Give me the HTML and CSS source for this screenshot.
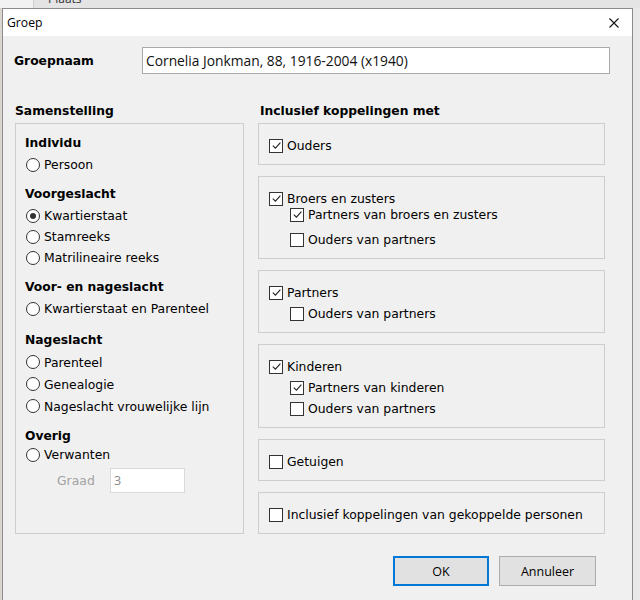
FILE: index.html
```html
<!DOCTYPE html>
<html>
<head>
<meta charset="utf-8">
<link rel="stylesheet" href="styles.css">
</head>
<body>
<div class="backdrop-top"><div class="tabcell"><span class="tabtext">Plaats</span></div></div>
<div class="stage">
  <div class="edge-left"></div>
  <div class="dialog">
    <div class="titlebar">
      <span class="title">Groep</span>
      <svg class="close" width="10" height="10" viewBox="0 0 10 10"><path d="M0.5 0.5 L9.5 9.5 M9.5 0.5 L0.5 9.5" stroke="#111" stroke-width="1.1" fill="none"/></svg>
    </div>
    <div class="content">
      <div class="namerow">
        <span class="namelabel">Groepnaam</span>
        <div class="textinput">Cornelia Jonkman, 88, 1916-2004 (x1940)</div>
      </div>
      <div class="columns">
        <div class="col col-left">
          <div class="colhead">Samenstelling</div>
          <div class="groupbox">
            <div class="section">
              <div class="sechead">Individu</div>
              <div class="opt"><span class="radio"></span>Persoon</div>
            </div>
            <div class="section">
              <div class="sechead">Voorgeslacht</div>
              <div class="opt"><span class="radio on"></span>Kwartierstaat</div>
              <div class="opt"><span class="radio"></span>Stamreeks</div>
              <div class="opt"><span class="radio"></span>Matrilineaire reeks</div>
            </div>
            <div class="section section-spaced">
              <div class="sechead">Voor- en nageslacht</div>
              <div class="opt"><span class="radio"></span>Kwartierstaat en Parenteel</div>
            </div>
            <div class="section section-wide">
              <div class="sechead">Nageslacht</div>
              <div class="opt"><span class="radio"></span>Parenteel</div>
              <div class="opt"><span class="radio"></span>Genealogie</div>
              <div class="opt"><span class="radio"></span>Nageslacht vrouwelijke lijn</div>
            </div>
            <div class="section section-tight">
              <div class="sechead">Overig</div>
              <div class="opt"><span class="radio"></span>Verwanten</div>
              <div class="graadrow">
                <span class="graadlabel">Graad</span>
                <div class="graadinput">3</div>
              </div>
            </div>
          </div>
        </div>
        <div class="col col-right">
          <div class="colhead colhead-right">Inclusief koppelingen met</div>
          <div class="box">
            <div class="opt"><span class="check on"><svg viewBox="0 0 11 11" width="11" height="11"><path d="M1.8 5.6 L4.4 8.2 L9.4 2.6" stroke="#222" stroke-width="1.1" fill="none"/></svg></span>Ouders</div>
          </div>
          <div class="box">
            <div class="opt"><span class="check on"><svg viewBox="0 0 11 11" width="11" height="11"><path d="M1.8 5.6 L4.4 8.2 L9.4 2.6" stroke="#222" stroke-width="1.1" fill="none"/></svg></span>Broers en zusters</div>
            <div class="opt sub pull-up"><span class="check on"><svg viewBox="0 0 11 11" width="11" height="11"><path d="M1.8 5.6 L4.4 8.2 L9.4 2.6" stroke="#222" stroke-width="1.1" fill="none"/></svg></span>Partners van broers en zusters</div>
            <div class="opt sub push-down"><span class="check"></span>Ouders van partners</div>
          </div>
          <div class="box">
            <div class="opt"><span class="check on"><svg viewBox="0 0 11 11" width="11" height="11"><path d="M1.8 5.6 L4.4 8.2 L9.4 2.6" stroke="#222" stroke-width="1.1" fill="none"/></svg></span>Partners</div>
            <div class="opt sub"><span class="check"></span>Ouders van partners</div>
          </div>
          <div class="box">
            <div class="opt"><span class="check on"><svg viewBox="0 0 11 11" width="11" height="11"><path d="M1.8 5.6 L4.4 8.2 L9.4 2.6" stroke="#222" stroke-width="1.1" fill="none"/></svg></span>Kinderen</div>
            <div class="opt sub"><span class="check on"><svg viewBox="0 0 11 11" width="11" height="11"><path d="M1.8 5.6 L4.4 8.2 L9.4 2.6" stroke="#222" stroke-width="1.1" fill="none"/></svg></span>Partners van kinderen</div>
            <div class="opt sub"><span class="check"></span>Ouders van partners</div>
          </div>
          <div class="box">
            <div class="opt"><span class="check"></span>Getuigen</div>
          </div>
          <div class="box">
            <div class="opt"><span class="check"></span>Inclusief koppelingen van gekoppelde personen</div>
          </div>
        </div>
      </div>
      <div class="buttons">
        <div class="btn btn-default">OK</div>
        <div class="btn">Annuleer</div>
      </div>
    </div>
  </div>
  <div class="backdrop-right"></div>
</div>
</body>
</html>
```
FILE: styles.css
```css
html, body {
  margin: 0;
  padding: 0;
}
body {
  width: 640px;
  height: 600px;
  overflow: hidden;
  background: #ececec;
  font-family: "DejaVu Sans", sans-serif;
  font-size: 12.4px;
  color: #000;
}
.backdrop-top {
  height: 8px;
  overflow: hidden;
  background: #f2f2f2;
  display: flex;
  padding-left: 33px;
}
.tabcell {
  flex: 1;
  background: #e4e4e4;
  border-left: 1px solid #d0d0d0;
  padding-left: 14px;
}
.tabtext {
  display: block;
  margin-top: -9px;
  line-height: 16px;
  font-family: "Open Sans", sans-serif;
  font-size: 12px;
  color: #333;
}
.stage {
  display: flex;
  height: 592px;
}
.edge-left {
  width: 2px;
  background: #d9d6cf;
}
.dialog {
  width: 629px;
  border: 1px solid #8c8c8c;
  border-bottom: none;
  background: #f0f0f0;
  display: flex;
  flex-direction: column;
}
.backdrop-right {
  flex: 1;
  background: #e9e9e9;
}
.titlebar {
  height: 27px;
  background: #fff;
  display: flex;
  align-items: center;
  justify-content: space-between;
  padding-left: 4px;
  padding-right: 13px;
}
.title {
  font-family: "Open Sans", sans-serif;
  font-size: 12.2px;
  color: #000;
}
.close {
  display: block;
}
.content {
  padding: 11px 0 0 11px;
}
.namerow {
  display: flex;
  align-items: center;
  height: 27px;
}
.namelabel {
  width: 128px;
  font-weight: bold;
  font-size: 12.3px;
}
.textinput {
  width: 463px;
  height: 25px;
  border: 1px solid #a9a9a9;
  background: #fff;
  padding-left: 3px;
  display: flex;
  align-items: center;
  font-family: "Open Sans", sans-serif;
  font-size: 13.8px;
  color: #111;
  box-sizing: content-box;
}
.columns {
  display: flex;
  gap: 14px;
  margin-top: 28px;
  margin-left: 1px;
}
.col {
  display: flex;
  flex-direction: column;
}
.col-left {
  width: 229px;
}
.col-right {
  width: 347px;
}
.colhead {
  line-height: 18px;
  height: 18px;
  margin-bottom: 3px;
  font-weight: bold;
  font-size: 12.3px;
}
.colhead-right {
  padding-left: 2px;
}
.groupbox {
  flex: 1;
  border: 1px solid #cdcdcd;
  padding: 9px 9px 0 9px;
}
.section {
  margin-bottom: 9px;
}
.section-spaced {
  margin-bottom: 11px;
}
.sechead {
  font-weight: bold;
  font-size: 12.3px;
  line-height: 20px;
  height: 20px;
  margin-bottom: 1px;
}
.section-tight .sechead {
  margin-bottom: -2px;
}
.opt {
  display: flex;
  align-items: center;
  height: 21px;
  gap: 4px;
  white-space: nowrap;
}
.section-wide .opt {
  height: 22px;
}
.radio {
  width: 12px;
  height: 12px;
  border: 1px solid #333;
  border-radius: 50%;
  background: #fff;
  margin-left: 1px;
  display: flex;
  align-items: center;
  justify-content: center;
  flex: none;
}
.radio.on::after {
  content: "";
  width: 6px;
  height: 6px;
  border-radius: 50%;
  background: #333;
}
.graadrow {
  display: flex;
  align-items: center;
  margin-top: 3px;
  padding-left: 32px;
}
.graadlabel {
  width: 53px;
  color: #a3a3a3;
}
.graadinput {
  width: 70px;
  height: 23px;
  border: 1px solid #d9d9d9;
  background: #fff;
  padding-left: 3px;
  color: #8a8a8a;
  display: flex;
  align-items: center;
  font-family: "Open Sans", sans-serif;
  font-size: 12.5px;
  box-sizing: content-box;
}
.box {
  border: 1px solid #cdcdcd;
  padding: 11px 10px 8px 10px;
  margin-bottom: 11px;
}
.box:last-child {
  margin-bottom: 0;
}
.check {
  width: 12px;
  height: 12px;
  border: 1px solid #333;
  background: #fff;
  flex: none;
  display: flex;
  align-items: center;
  justify-content: center;
}
.check svg {
  display: block;
}
.sub {
  padding-left: 21px;
}
.pull-up {
  margin-top: -5px;
}
.push-down {
  margin-top: 4px;
}
.buttons {
  display: flex;
  justify-content: flex-end;
  gap: 10px;
  margin-top: 22px;
  margin-right: 36px;
}
.btn {
  width: 95px;
  height: 28px;
  border: 1px solid #adadad;
  background: #e1e1e1;
  display: flex;
  align-items: center;
  justify-content: center;
  font-family: "Open Sans", sans-serif;
  font-size: 12.5px;
  color: #000;
}
.btn-default {
  width: 92px;
  height: 26px;
  border: 2px solid #0078d7;
}
```
